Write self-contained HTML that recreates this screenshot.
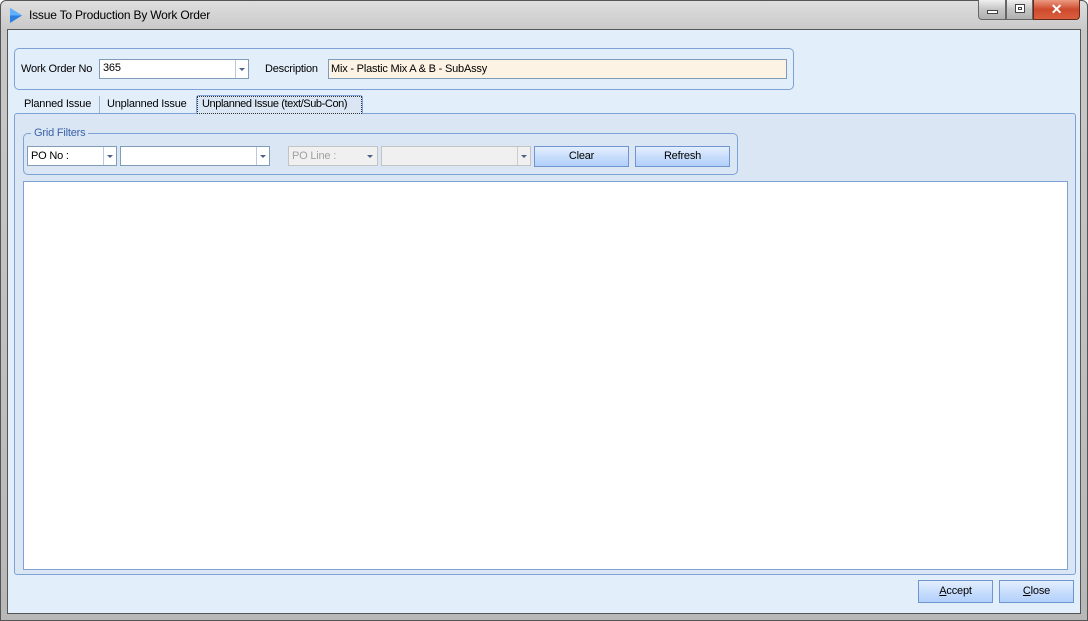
<!DOCTYPE html>
<html><head><meta charset="utf-8"><style>
*{box-sizing:border-box;margin:0;padding:0}
body{width:1088px;height:621px;overflow:hidden;background:#fff;font-family:"Liberation Sans",sans-serif;font-size:11px;letter-spacing:-0.2px;color:#000;position:relative;white-space:nowrap}
.a{position:absolute}
.frame{left:0;top:0;width:1088px;height:621px;background:linear-gradient(#dedede,#c8c8c8 30px,#b8b8b8);border:1px solid #555;border-radius:6px 6px 0 0}
.client{left:7px;top:29px;width:1074px;height:585px;background:#e3eefb;border:1px solid #555}
.combo{background:#fff;border:1px solid #7f9db9}
.arr{position:absolute;right:0;top:0;bottom:0;width:13px;border-left:1px solid #b9c9e0;}
.arr:after{content:"";position:absolute;left:3px;top:8px;border:3px solid transparent;border-top:3px solid #4d6185}
.btn{background:linear-gradient(#e4efff,#c9defc 50%,#b2d0fb);border:1px solid #6f95d0;text-align:center;line-height:18px;font-size:11px}
.gb{border:1px solid #7ea2d6;border-radius:5px}
</style></head><body>
<div class="a frame"></div>
<svg class="a" style="left:9px;top:7px" width="14" height="17"><polygon points="1,1 13,8.5 1,16" fill="#2a7fe0"/><polygon points="1,1 13,8.5 1,8.5" fill="#5fb0ff"/></svg>
<div class="a" style="left:29px;top:8px;font-size:12px">Issue To Production By Work Order</div>
<div class="a" style="left:978px;top:0;width:28px;height:20px;border:1px solid #666;border-top:none;border-radius:0 0 0 4px;background:linear-gradient(#f0f0f0,#c4c4c4 50%,#b0b0b0)"><div class="a" style="left:8px;top:10px;width:11px;height:4px;background:#fff;border:1px solid #444"></div></div>
<div class="a" style="left:1006px;top:0;width:27px;height:20px;border:1px solid #666;border-top:none;background:linear-gradient(#f0f0f0,#c4c4c4 50%,#b0b0b0)"><div class="a" style="left:8px;top:4px;width:10px;height:9px;border:1px solid #444;background:#fff"><div class="a" style="left:2px;top:2px;width:4px;height:3px;border:1px solid #444"></div></div></div>
<div class="a" style="left:1033px;top:0;width:47px;height:20px;border:1px solid #6a2a1a;border-top:none;border-radius:0 0 4px 0;background:linear-gradient(#eb9a82,#cf4a2c 50%,#d8603e);color:#fff;font-weight:bold;font-size:14px;text-align:center;line-height:18px">✕</div>
<div class="a client"></div>
<div class="a gb" style="left:14px;top:48px;width:780px;height:42px"></div>
<div class="a" style="left:21px;top:63px">Work Order No</div>
<div class="a combo" style="left:99px;top:59px;width:150px;height:20px"><span style="position:absolute;left:3px;top:2px">365</span><div class="arr"></div></div>
<div class="a" style="left:265px;top:63px">Description</div>
<div class="a" style="left:328px;top:59px;width:459px;height:20px;background:#fdf3e4;border:1px solid #7f9db9;padding:3px 2px">Mix - Plastic Mix A &amp; B - SubAssy</div>
<div class="a" style="left:14px;top:113px;width:1062px;height:462px;background:#dae6f4;border:1px solid #7ea2d6;border-radius:3px"></div>
<div class="a" style="left:24px;top:98px">Planned Issue</div>
<div class="a" style="left:99px;top:96px;height:17px;border-left:1px solid #9fb5d3"></div>
<div class="a" style="left:107px;top:98px">Unplanned Issue</div>
<div class="a" style="left:196px;top:95px;width:167px;height:19px;background:#dae6f4;border:1px solid #7ea2d6;border-bottom:none;border-radius:3px 3px 0 0"></div>
<div class="a" style="left:198px;top:97px;width:163px;height:16px;outline:1px dotted #333;padding:1px 4px;letter-spacing:-0.4px">Unplanned Issue (text/Sub-Con)</div>
<div class="a gb" style="left:23px;top:133px;width:715px;height:42px"></div>
<div class="a" style="left:31px;top:127px;background:#dae6f4;padding:0 3px;color:#3a62a8">Grid Filters</div>
<div class="a combo" style="left:27px;top:146px;width:90px;height:20px"><span style="position:absolute;left:3px;top:3px">PO No :</span><div class="arr"></div></div>
<div class="a combo" style="left:120px;top:146px;width:150px;height:20px"><div class="arr"></div></div>
<div class="a" style="left:288px;top:146px;width:90px;height:20px;border:1px solid #c3c3c3;background:#f0f0f0;color:#a0a0a0"><span style="position:absolute;left:3px;top:3px">PO Line :</span><div class="arr" style="border-left:none"></div></div>
<div class="a" style="left:381px;top:146px;width:150px;height:20px;border:1px solid #c3c3c3;background:#f0f0f0"><div class="arr" style="border-left:1px solid #ccc"></div></div>
<div class="a btn" style="left:534px;top:146px;width:95px;height:21px">Clear</div>
<div class="a btn" style="left:635px;top:146px;width:95px;height:21px">Refresh</div>
<div class="a" style="left:23px;top:181px;width:1045px;height:389px;background:#fff;border:1px solid #7ea2d6"></div>
<div class="a btn" style="left:918px;top:580px;width:75px;height:23px;line-height:21px"><u>A</u>ccept</div>
<div class="a btn" style="left:999px;top:580px;width:75px;height:23px;line-height:21px"><u>C</u>lose</div>
</body></html>
